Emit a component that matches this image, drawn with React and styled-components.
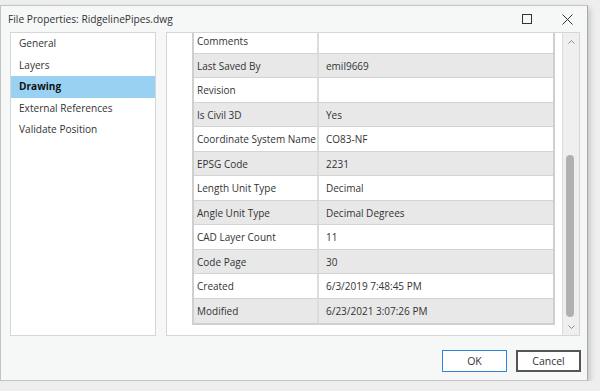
import React from "react"
import styled, { createGlobalStyle } from "styled-components"

const GlobalStyle = createGlobalStyle`
  html, body {
    margin: 0;
    padding: 0;
    background: #eeeeee;
    font-family: "Open Sans", "Noto Sans", "Liberation Sans", sans-serif;
    color: #222;
  }
`

const tabs = ["General", "Layers", "Drawing", "External References", "Validate Position"]

const rows = [
  ["Comments", ""],
  ["Last Saved By", "emil9669"],
  ["Revision", ""],
  ["Is Civil 3D", "Yes"],
  ["Coordinate System Name", "CO83-NF"],
  ["EPSG Code", "2231"],
  ["Length Unit Type", "Decimal"],
  ["Angle Unit Type", "Decimal Degrees"],
  ["CAD Layer Count", "11"],
  ["Code Page", "30"],
  ["Created", "6/3/2019 7:48:45 PM"],
  ["Modified", "6/23/2021 3:07:26 PM"],
]

const Window = styled.div`
  margin-top: 5px;
  width: 588px;
  height: 376px;
  box-sizing: border-box;
  background: #f6f7f7;
  border: 1px solid #c4c4c4;
  border-right-color: #a9a9a9;
  box-shadow: 2px 3px 6px rgba(0, 0, 0, 0.18);
  display: flex;
  flex-direction: column;
`

const TitleBar = styled.div`
  height: 26px;
  display: flex;
  align-items: center;
  padding-left: 7px;
  font-size: 10.2px;
  color: #333;
`

const Title = styled.div`
  flex: 1;
`

const WinButton = styled.div`
  width: 40px;
  display: flex;
  justify-content: center;
  align-items: center;
`

const Body = styled.div`
  display: flex;
  gap: 10px;
  padding: 0 7px 0 9px;
  height: 304px;
`

const NavList = styled.div`
  width: 147px;
  box-sizing: border-box;
  background: #fff;
  border: 1px solid #d6d6d6;
  display: flex;
  flex-direction: column;
`

const NavItem = styled.div`
  height: 21.5px;
  line-height: 21.5px;
  padding-left: 8px;
  font-size: 10.1px;
  font-weight: ${p => (p.active ? 700 : 400)};
  background: ${p => (p.active ? "#99d1f3" : "transparent")};
  color: ${p => (p.active ? "#111" : "#333")};
`

const Panel = styled.div`
  flex: 1;
  box-sizing: border-box;
  background: #fff;
  border: 1px solid #d6d6d6;
  display: flex;
  padding-left: 25px;
`

const Viewport = styled.div`
  width: 363px;
  overflow: hidden;
  margin-right: 7px;
`

const Table = styled.div`
  margin-top: -4px;
  border: 2px solid #cfcfcf;
  border-top: none;
  display: grid;
  grid-template-columns: 125px 1fr;
`

const Cell = styled.div`
  height: 24.5px;
  box-sizing: border-box;
  line-height: 23.5px;
  padding-top: 1px;
  font-size: 10px;
  color: #333;
  padding-left: ${p => (p.label ? "3px" : "7px")};
  background: ${p => (p.shaded ? "#e8e8e8" : "#fff")};
  border-bottom: ${p => (p.last ? "none" : "1px solid #d3d3d3")};
  border-right: ${p => (p.label ? "2px solid #dcdcdc" : "none")};
  white-space: nowrap;
`

const ScrollBar = styled.div`
  width: 16px;
  background: #efefef;
  border-left: 1px solid #dcdcdc;
  display: flex;
  flex-direction: column;
`

const Arrow = styled.div`
  height: 17px;
  display: flex;
  align-items: center;
  justify-content: center;
`

const Track = styled.div`
  flex: 1;
  display: flex;
  flex-direction: column;
  padding: 105px 0 1px 3px;
`

const Thumb = styled.div`
  flex: 1;
  width: 8px;
  border-radius: 4px;
  background: #b0b0b0;
`

const Footer = styled.div`
  display: flex;
  justify-content: flex-end;
  gap: 9px;
  padding: 14px 6px 0 0;
`

const Button = styled.button`
  width: 65px;
  height: 22px;
  box-sizing: border-box;
  background: #fff;
  font-family: inherit;
  font-size: 10.5px;
  color: #333;
  padding: 0;
  border: ${p => (p.primary ? "1px solid #2b86d6" : "2px solid #555")};
`

const Chevron = ({ up }) => (
  <svg width="7" height="4" viewBox="0 0 7 4">
    <polyline
      points={up ? "0.5,3.5 3.5,0.5 6.5,3.5" : "0.5,0.5 3.5,3.5 6.5,0.5"}
      fill="none"
      stroke="#8a8a8a"
      strokeWidth="1"
    />
  </svg>
)

const App = () => {
  return (
    <>
      <GlobalStyle />
      <Window>
        <TitleBar>
          <Title>File Properties: RidgelinePipes.dwg</Title>
          <WinButton>
            <svg width="10" height="10" viewBox="0 0 10 10">
              <rect x="0.5" y="0.5" width="9" height="9" fill="none" stroke="#333" />
            </svg>
          </WinButton>
          <WinButton>
            <svg width="11" height="11" viewBox="0 0 11 11">
              <path d="M0.5 0.5 L10.5 10.5 M10.5 0.5 L0.5 10.5" stroke="#333" strokeWidth="1" />
            </svg>
          </WinButton>
        </TitleBar>
        <Body>
          <NavList>
            {tabs.map(t => (
              <NavItem key={t} active={t === "Drawing"}>
                {t}
              </NavItem>
            ))}
          </NavList>
          <Panel>
            <Viewport>
              <Table>
                {rows.map(([k, v], i) => (
                  <React.Fragment key={k}>
                    <Cell label shaded={i % 2 === 1} last={i === rows.length - 1}>
                      {k}
                    </Cell>
                    <Cell shaded={i % 2 === 1} last={i === rows.length - 1}>
                      {v}
                    </Cell>
                  </React.Fragment>
                ))}
              </Table>
            </Viewport>
            <ScrollBar>
              <Arrow>
                <Chevron up />
              </Arrow>
              <Track>
                <Thumb />
              </Track>
              <Arrow>
                <Chevron />
              </Arrow>
            </ScrollBar>
          </Panel>
        </Body>
        <Footer>
          <Button primary>OK</Button>
          <Button>Cancel</Button>
        </Footer>
      </Window>
    </>
  )
}

export default App
